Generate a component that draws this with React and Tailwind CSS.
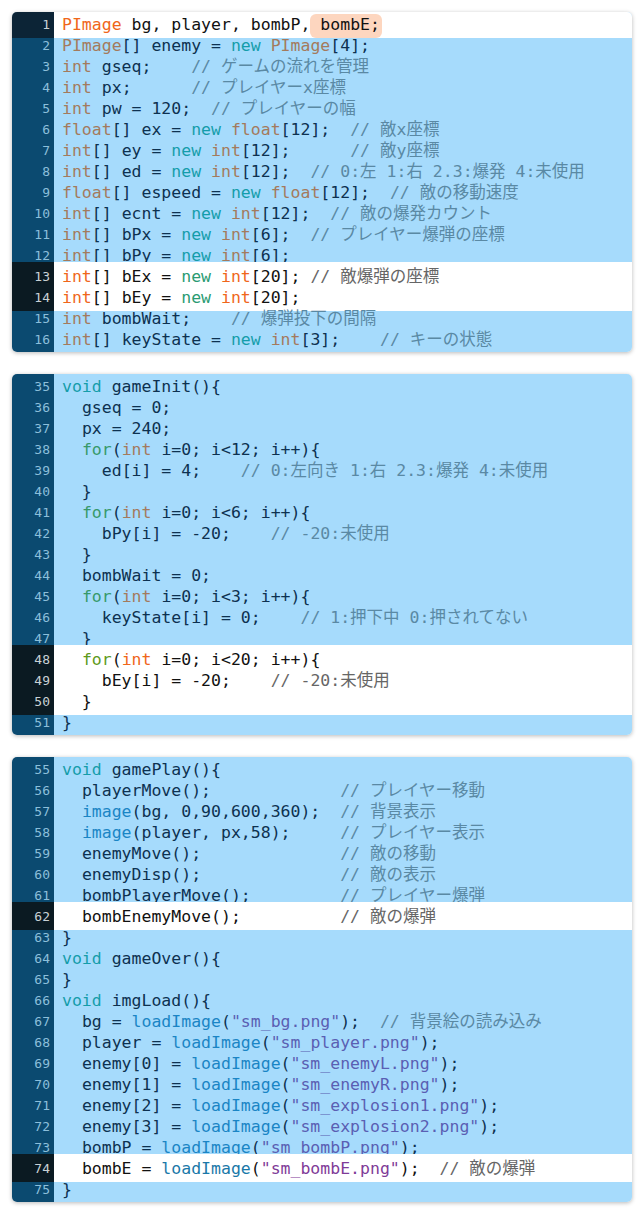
import React from "react";

// Processing IDE palette: "dim" is how tokens look under the blue overlay,
// "bright" is the white (changed lines) version.
const palette = {
  dim: {
    type: "text-[#a47a5c]",
    kw: "text-[#149daa]",
    ctl: "text-[#37996a]",
    fn: "text-[#1a85c5]",
    str: "text-[#5a5fb3]",
    com: "text-[#5a89a4]",
    plain: "text-[#0d3150]",
  },
  bright: {
    type: "text-[#f0661a]",
    kw: "text-[#2a9b72]",
    ctl: "text-[#5e9a1c]",
    fn: "text-[#1a78a8]",
    str: "text-[#7f3b98]",
    com: "text-[#666666]",
    plain: "text-[#111111]",
  },
};

const TYPES = ["int", "float", "PImage"];
const KWS = ["new", "void"];
const FNS = ["image", "loadImage"];

function classify(tok) {
  if (tok.startsWith("//")) return "com";
  if (tok.startsWith('"')) return "str";
  if (TYPES.includes(tok)) return "type";
  if (KWS.includes(tok)) return "kw";
  if (tok === "for") return "ctl";
  if (FNS.includes(tok)) return "fn";
  return "plain";
}

function CodeText({ text, tone }) {
  const toks = text.match(/\/\/.*|"[^"]*"|[A-Za-z_]\w*|[^A-Za-z_"/]+|./g) || [];
  return toks.map((t, i) => (
    <span key={i} className={palette[tone][classify(t)]}>
      {t}
    </span>
  ));
}

// one run of lines that share the same highlight state
function Segment({ start, lines, hl, gutter = "bg-[#0b1a22]", extra }) {
  const tone = hl ? "bright" : "dim";
  return (
    <div
      className={
        hl
          ? "relative flex -mt-[4px] -mb-[3px] pt-[4px] pb-[3px] bg-white"
          : "relative flex"
      }
    >
      <div
        className={
          hl
            ? `w-[42px] shrink-0 -mt-[4px] -mb-[3px] pt-[4px] pb-[3px] ${gutter}`
            : "w-[42px] shrink-0"
        }
      >
        {lines.map((_, i) => (
          <div
            key={i}
            className={`h-[21px] leading-[21px] text-right pr-[4px] text-[13px] ${
              hl ? "text-[#c9d1d5]" : "text-[#8cbfdb]"
            }`}
          >
            {start + i}
          </div>
        ))}
      </div>
      <div className="flex-1 pl-[8px] whitespace-pre">
        {lines.map((l, i) => (
          <div key={i} className="h-[21px] leading-[21px]">
            <CodeText text={l} tone={tone} />
            {extra && i === 0 ? extra : null}
          </div>
        ))}
      </div>
    </div>
  );
}

function Panel({ children }) {
  return (
    <div className="rounded-[5px] overflow-hidden py-[2px] bg-[linear-gradient(to_right,#0b4a70_42px,#a6dbfc_42px)] shadow-[0_1px_4px_rgba(0,0,0,0.28)]">
      {children}
    </div>
  );
}

export default function App() {
  return (
    <div
      className="w-[644px] min-h-[1213px] bg-white px-[12px] pt-[12px] flex flex-col gap-[22px] text-[16.5px]"
      style={{ fontFamily: '"DejaVu Sans Mono", "Noto Sans CJK JP", monospace' }}
    >
      <Panel>
        <Segment
          start={1}
          hl
          gutter="bg-[#0c2436]"
          lines={["PImage bg, player, bombP,"]}
          extra={
            <span className="rounded-[6px] bg-[#fdd6bf] pt-[1px] pb-[4px] pr-[2px] text-[#111111]">
              {" bombE;"}
            </span>
          }
        />
        <Segment
          start={2}
          lines={[
            "PImage[] enemy = new PImage[4];",
            "int gseq;    // ゲームの流れを管理",
            "int px;      // プレイヤーx座標",
            "int pw = 120;  // プレイヤーの幅",
            "float[] ex = new float[12];  // 敵x座標",
            "int[] ey = new int[12];      // 敵y座標",
            "int[] ed = new int[12];  // 0:左 1:右 2.3:爆発 4:未使用",
            "float[] espeed = new float[12];  // 敵の移動速度",
            "int[] ecnt = new int[12];  // 敵の爆発カウント",
            "int[] bPx = new int[6];  // プレイヤー爆弾の座標",
            "int[] bPy = new int[6];",
          ]}
        />
        <Segment
          start={13}
          hl
          lines={["int[] bEx = new int[20]; // 敵爆弾の座標", "int[] bEy = new int[20];"]}
        />
        <Segment
          start={15}
          lines={["int bombWait;    // 爆弾投下の間隔", "int[] keyState = new int[3];    // キーの状態"]}
        />
      </Panel>

      <Panel>
        <Segment
          start={35}
          lines={[
            "void gameInit(){",
            "  gseq = 0;",
            "  px = 240;",
            "  for(int i=0; i<12; i++){",
            "    ed[i] = 4;    // 0:左向き 1:右 2.3:爆発 4:未使用",
            "  }",
            "  for(int i=0; i<6; i++){",
            "    bPy[i] = -20;    // -20:未使用",
            "  }",
            "  bombWait = 0;",
            "  for(int i=0; i<3; i++){",
            "    keyState[i] = 0;    // 1:押下中 0:押されてない",
            "  }",
          ]}
        />
        <Segment
          start={48}
          hl
          lines={["  for(int i=0; i<20; i++){", "    bEy[i] = -20;    // -20:未使用", "  }"]}
        />
        <Segment start={51} lines={["}"]} />
      </Panel>

      <Panel>
        <Segment
          start={55}
          lines={[
            "void gamePlay(){",
            "  playerMove();             // プレイヤー移動",
            "  image(bg, 0,90,600,360);  // 背景表示",
            "  image(player, px,58);     // プレイヤー表示",
            "  enemyMove();              // 敵の移動",
            "  enemyDisp();              // 敵の表示",
            "  bombPlayerMove();         // プレイヤー爆弾",
          ]}
        />
        <Segment start={62} hl lines={["  bombEnemyMove();          // 敵の爆弾"]} />
        <Segment
          start={63}
          lines={[
            "}",
            "void gameOver(){",
            "}",
            "void imgLoad(){",
            '  bg = loadImage("sm_bg.png");  // 背景絵の読み込み',
            '  player = loadImage("sm_player.png");',
            '  enemy[0] = loadImage("sm_enemyL.png");',
            '  enemy[1] = loadImage("sm_enemyR.png");',
            '  enemy[2] = loadImage("sm_explosion1.png");',
            '  enemy[3] = loadImage("sm_explosion2.png");',
            '  bombP = loadImage("sm_bombP.png");',
          ]}
        />
        <Segment start={74} hl lines={['  bombE = loadImage("sm_bombE.png");  // 敵の爆弾']} />
        <Segment start={75} lines={["}"]} />
      </Panel>
    </div>
  );
}
